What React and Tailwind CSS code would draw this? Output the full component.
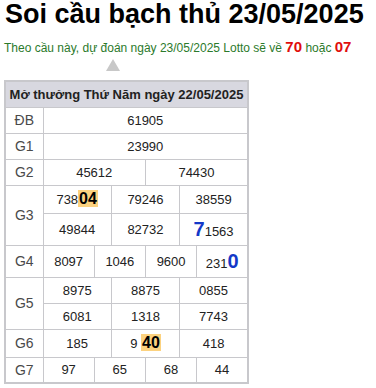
import React from "react";

const rows = [
  { label: "ĐB", cells: [[12, "61905"]] },
  { label: "G1", cells: [[12, "23990"]] },
  { label: "G2", cells: [[6, "45612"], [6, "74430"]] },
];

const Hot = ({ children }) => (
  <span className="bg-[#fcd27f] px-[1px] text-[16px] font-bold text-black">
    {children}
  </span>
);

const Blue = ({ children }) => (
  <span className="text-[20px] font-bold text-[#1438c8] leading-none">{children}</span>
);

const Label = ({ children, rowSpan }) => (
  <td rowSpan={rowSpan} className="border border-[#c8c8cc] text-center text-[14px] text-[#4a4a4a]">
    {children}
  </td>
);

const Cell = ({ span, children, className = "" }) => (
  <td colSpan={span} className={`border border-[#c8c8cc] text-center ${className}`}>
    {children}
  </td>
);

export default function App() {
  return (
    <div className="w-[376px] h-[388px] overflow-hidden bg-white px-1 font-['Liberation_Sans',Arial,sans-serif] text-[#222]">
      <h1 className="whitespace-nowrap pl-[1px] text-[27px] leading-[28px] font-bold text-black">
        Soi cầu bạch thủ 23/05/2025
      </h1>
      <p className="mt-[10px] whitespace-nowrap text-[12px] leading-[18px] text-[#2b7a2b]">
        Theo cầu này, dự đoán ngày 23/05/2025 Lotto sẽ về{" "}
        <span className="text-[15px] font-bold text-[#e00d0d]">70</span> hoặc{" "}
        <span className="text-[15px] font-bold text-[#e00d0d]">07</span>
      </p>
      <div className="ml-[102px] mt-[2px] h-0 w-0 border-x-[7px] border-b-[12px] border-x-transparent border-b-[#c8c8c8]"></div>
      <table className="mt-[9px] w-[245px] table-fixed border-collapse border-2 border-[#c8c8cc] text-[13px] leading-none">
        <colgroup>
          <col className="w-[38px]" />
          {Array.from({ length: 12 }).map((_, i) => (
            <col key={i} />
          ))}
        </colgroup>
        <tbody>
          <tr className="h-[26px] bg-[#d8d8e0]">
            <th colSpan={13} className="whitespace-nowrap border border-[#c8c8cc] text-center text-[13px] font-bold text-[#222]">
              Mở thưởng Thứ Năm ngày 22/05/2025
            </th>
          </tr>
          {rows.map((r) => (
            <tr key={r.label} className="h-[26px]">
              <Label>{r.label}</Label>
              {r.cells.map(([s, v], i) => (
                <Cell key={i} span={s}>{v}</Cell>
              ))}
            </tr>
          ))}
          <tr className="h-[28px]">
            <Label rowSpan={2}>G3</Label>
            <Cell span={4}>
              738<Hot>04</Hot>
            </Cell>
            <Cell span={4}>79246</Cell>
            <Cell span={4}>38559</Cell>
          </tr>
          <tr className="h-[32px]">
            <Cell span={4}>49844</Cell>
            <Cell span={4}>82732</Cell>
            <Cell span={4}>
              <Blue>7</Blue>1563
            </Cell>
          </tr>
          <tr className="h-[32px]">
            <Label>G4</Label>
            <Cell span={3}>8097</Cell>
            <Cell span={3}>1046</Cell>
            <Cell span={3}>9600</Cell>
            <Cell span={3}>
              231<Blue>0</Blue>
            </Cell>
          </tr>
          <tr className="h-[26px]">
            <Label rowSpan={2}>G5</Label>
            <Cell span={4}>8975</Cell>
            <Cell span={4}>8875</Cell>
            <Cell span={4}>0855</Cell>
          </tr>
          <tr className="h-[26px]">
            <Cell span={4}>6081</Cell>
            <Cell span={4}>1318</Cell>
            <Cell span={4}>7743</Cell>
          </tr>
          <tr className="h-[28px]">
            <Label>G6</Label>
            <Cell span={4}>185</Cell>
            <Cell span={4}>
              9 <Hot>40</Hot>
            </Cell>
            <Cell span={4}>418</Cell>
          </tr>
          <tr className="h-[26px]">
            <Label>G7</Label>
            <Cell span={3}>97</Cell>
            <Cell span={3}>65</Cell>
            <Cell span={3}>68</Cell>
            <Cell span={3}>44</Cell>
          </tr>
        </tbody>
      </table>
    </div>
  );
}
